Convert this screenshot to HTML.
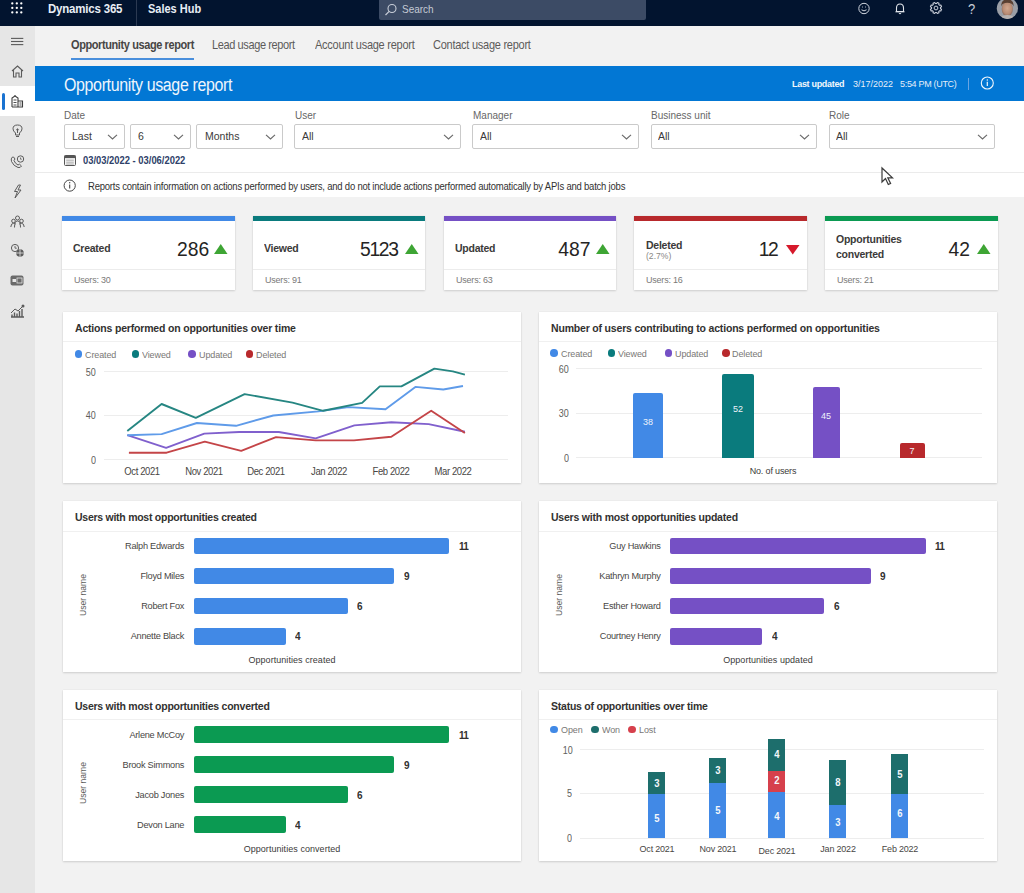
<!DOCTYPE html>
<html><head><meta charset="utf-8"><title>Opportunity usage report</title>
<style>
*{margin:0;padding:0;box-sizing:border-box}
html,body{width:1024px;height:893px;overflow:hidden}
body{background:#f2f2f2;font-family:"Liberation Sans",sans-serif;position:relative;color:#323130}
.a{position:absolute}
.t{position:absolute;white-space:nowrap;line-height:1}
.card{position:absolute;background:#fff;box-shadow:0 1px 2px rgba(0,0,0,.14),0 0 1px rgba(0,0,0,.10)}
svg{position:absolute;overflow:visible}
</style></head><body>
<div class="a" style="left:0;top:0;width:1024px;height:26px;background:#02142f"></div>
<div class="a" style="left:0;top:26px;width:35px;height:867px;background:#e6e6e6"></div>
<div class="a" style="left:0;top:86px;width:35px;height:30px;background:#fff"></div>
<div class="a" style="left:2px;top:92.5px;width:3px;height:17.5px;background:#1a73d1;border-radius:2px"></div>
<div class="a" style="left:35px;top:26px;width:989px;height:40px;background:#f2f2f2"></div>
<div class="a" style="left:35px;top:66px;width:989px;height:35px;background:#0277d4"></div>
<div class="a" style="left:35px;top:101px;width:989px;height:96px;background:#fff"></div>
<div class="a" style="left:35px;top:171.5px;width:989px;height:1px;background:#ebebeb"></div>
<svg style="left:0;top:0" width="30" height="20"><circle cx="12.3" cy="3.4" r="1.15" fill="#fff"/><circle cx="12.3" cy="7.9" r="1.15" fill="#fff"/><circle cx="12.3" cy="12.4" r="1.15" fill="#fff"/><circle cx="16.8" cy="3.4" r="1.15" fill="#fff"/><circle cx="16.8" cy="7.9" r="1.15" fill="#fff"/><circle cx="16.8" cy="12.4" r="1.15" fill="#fff"/><circle cx="21.3" cy="3.4" r="1.15" fill="#fff"/><circle cx="21.3" cy="7.9" r="1.15" fill="#fff"/><circle cx="21.3" cy="12.4" r="1.15" fill="#fff"/></svg>
<div class="t" style="font-size:12.65px;font-weight:700;color:#e8edf5;top:2.89px;letter-spacing:-0.220px;left:47.60px;transform:scaleX(0.9091);transform-origin:0 0;">Dynamics 365</div>
<div class="a" style="left:136px;top:0;width:1px;height:26px;background:#2c3a52"></div>
<div class="t" style="font-size:12.10px;font-weight:700;color:#e8edf5;top:3.36px;left:148.00px;transform:scaleX(0.9091);transform-origin:0 0;">Sales Hub</div>
<div class="a" style="left:379px;top:0;width:267px;height:20px;background:#3c4b65;border-radius:0 0 2px 2px"></div>
<svg style="left:383px;top:2px" width="16" height="16"><circle cx="9" cy="6.5" r="4" fill="none" stroke="#c8ced8" stroke-width="1.1"/><line x1="6.2" y1="9.3" x2="2.5" y2="13" stroke="#c8ced8" stroke-width="1.2"/></svg>
<div class="t" style="font-size:11.00px;font-weight:400;color:#c4cad4;top:4.29px;left:402.00px;transform:scaleX(0.9091);transform-origin:0 0;">Search</div>
<svg style="left:856px;top:1px" width="16" height="16"><circle cx="8" cy="7.5" r="5.2" fill="none" stroke="#d0d5de" stroke-width="1"/><path d="M5.5 8.8 Q8 11 10.5 8.8" fill="none" stroke="#d0d5de" stroke-width="1"/><line x1="6" y1="6" x2="6.8" y2="6" stroke="#d0d5de" stroke-width="1"/><line x1="9.2" y1="6" x2="10" y2="6" stroke="#d0d5de" stroke-width="1"/></svg>
<svg style="left:892px;top:1px" width="16" height="16"><path d="M4.5 10.5 V7 Q4.5 3 8 3 Q11.5 3 11.5 7 V10.5 Z" fill="none" stroke="#e0e4ea" stroke-width="1.1"/><line x1="3.5" y1="10.8" x2="12.5" y2="10.8" stroke="#e0e4ea" stroke-width="1.1"/><path d="M6.8 12.2 Q8 13.6 9.2 12.2" fill="none" stroke="#e0e4ea" stroke-width="1"/></svg>
<svg style="left:928px;top:0px" width="16" height="16"><path d="M12.46 8.60 L13.55 9.31 L12.85 10.99 L11.58 10.73 L10.73 11.58 L10.99 12.85 L9.31 13.55 L8.60 12.46 L7.40 12.46 L6.69 13.55 L5.01 12.85 L5.27 11.58 L4.42 10.73 L3.15 10.99 L2.45 9.31 L3.54 8.60 L3.54 7.40 L2.45 6.69 L3.15 5.01 L4.42 5.27 L5.27 4.42 L5.01 3.15 L6.69 2.45 L7.40 3.54 L8.60 3.54 L9.31 2.45 L10.99 3.15 L10.73 4.42 L11.58 5.27 L12.85 5.01 L13.55 6.69 L12.46 7.40 Z" fill="none" stroke="#c9ced8" stroke-width="1.1" stroke-linejoin="round"/><circle cx="8" cy="8" r="1.9" fill="none" stroke="#c9ced8" stroke-width="1"/></svg>
<div class="t" style="font-size:14.95px;font-weight:400;color:#c8ced8;top:2.44px;left:967.80px;transform:scaleX(0.8696);transform-origin:0 0;">?</div>
<svg style="left:996px;top:-3px" width="23" height="23"><defs><clipPath id="av"><circle cx="11.4" cy="11.3" r="10.6"/></clipPath><radialGradient id="fg" cx="50%" cy="45%" r="55%"><stop offset="0" stop-color="#d2a78e"/><stop offset="0.7" stop-color="#b98c74"/><stop offset="1" stop-color="#8a6a5c"/></radialGradient></defs><g clip-path="url(#av)"><rect width="23" height="23" fill="#9a9ea6"/><ellipse cx="11.3" cy="12" rx="5.6" ry="7.6" fill="url(#fg)"/><path d="M5.2 9.5 Q5 2.2 11.4 2.4 Q17.8 2.2 17.6 9.5 Q16.5 5.8 11.3 5.8 Q6.2 5.8 5.2 9.5 Z" fill="#5a4032"/><ellipse cx="11.3" cy="21" rx="7" ry="3" fill="#b8b2b0"/></g></svg>
<svg style="left:11px;top:36px" width="13" height="10"><line x1="0" y1="2.4" x2="12.3" y2="2.4" stroke="#5b5b5b" stroke-width="1.1"/><line x1="0" y1="5.5" x2="12.3" y2="5.5" stroke="#5b5b5b" stroke-width="1.1"/><line x1="0" y1="8.6" x2="12.3" y2="8.6" stroke="#5b5b5b" stroke-width="1.1"/></svg>
<svg style="left:11px;top:65px" width="13" height="13"><path d="M1 6 L6.5 1 L12 6 M2.5 4.8 V12 H5 V8 H8 V12 H10.5 V4.8" fill="none" stroke="#5b5b5b" stroke-width="1.1"/></svg>
<svg style="left:11px;top:94px" width="13" height="14"><path d="M1 13 V4 L4 2 V1 M4 2 L7 4 V13 M7 7 H11.5 V13 M1 13 H12" fill="none" stroke="#3c3c3c" stroke-width="1.1"/><path d="M2.5 6 H5.5 M2.5 8.5 H5.5 M2.5 11 H5.5 M8.5 9 H10.5 M8.5 11 H10.5" stroke="#3c3c3c" stroke-width="0.9"/></svg>
<svg style="left:12px;top:124px" width="11" height="14"><path d="M3.5 9 Q1 7 1 4.8 Q1 1 5.5 1 Q10 1 10 4.8 Q10 7 7.5 9 V11 H3.5 Z" fill="none" stroke="#5b5b5b" stroke-width="1"/><path d="M4 12.5 H7 M4.2 6 L5.5 4.8 L6.8 6 M5.5 5 V9" fill="none" stroke="#5b5b5b" stroke-width="1"/></svg>
<svg style="left:10px;top:154px" width="15" height="15"><path d="M2.5 3 Q0.5 4.5 1.5 7.5 Q3.5 12 8 13.5 Q10.5 14 11.5 12 L9.5 10.2 L8 11 Q5 9.5 4 6.5 L5 5 L3.5 3 Z" fill="none" stroke="#5b5b5b" stroke-width="1"/><circle cx="10.5" cy="5" r="3.2" fill="none" stroke="#5b5b5b" stroke-width="1"/><path d="M10.5 3.5 V5.2 H11.8" fill="none" stroke="#5b5b5b" stroke-width="0.8"/></svg>
<svg style="left:12px;top:184px" width="11" height="15"><path d="M6.5 1 L2.5 7.5 H5.5 L3 14 L9 6 H6 L8.5 1 Z" fill="none" stroke="#5b5b5b" stroke-width="1"/></svg>
<svg style="left:10px;top:215px" width="15" height="14"><circle cx="7.5" cy="3" r="2" fill="none" stroke="#5b5b5b" stroke-width="1"/><circle cx="3.5" cy="6" r="1.8" fill="none" stroke="#5b5b5b" stroke-width="1"/><circle cx="11.5" cy="6" r="1.8" fill="none" stroke="#5b5b5b" stroke-width="1"/><path d="M0.8 12 Q1 8.3 3.5 8.3 Q5 8.3 5.6 9.2 M14.2 12 Q14 8.3 11.5 8.3 Q10 8.3 9.4 9.2 M4.5 12.5 Q4.5 6 7.5 6 Q10.5 6 10.5 12.5" fill="none" stroke="#5b5b5b" stroke-width="1"/></svg>
<svg style="left:10px;top:243px" width="15" height="15"><circle cx="5" cy="5" r="3.6" fill="none" stroke="#5b5b5b" stroke-width="1"/><path d="M5 3 V5.2 H6.8" fill="none" stroke="#5b5b5b" stroke-width="0.9"/><circle cx="10" cy="10" r="3.8" fill="#5b5b5b"/><path d="M6.2 10 H13.8 M10 6.2 V13.8" stroke="#e6e6e6" stroke-width="0.8"/></svg>
<svg style="left:10px;top:275px" width="15" height="12"><rect x="0.5" y="0.5" width="13" height="10" rx="2" fill="#6a6a6a"/><rect x="2.5" y="4" width="3.5" height="3" fill="#e6e6e6"/><rect x="7" y="3" width="5" height="5" fill="none" stroke="#e6e6e6" stroke-width="0.8"/></svg>
<svg style="left:10px;top:304px" width="15" height="14"><path d="M1 13 H14 M2 13 V10.5 M4.5 13 V8.5 M7 13 V9.5 M9.5 13 V7 M12 13 V5" stroke="#5b5b5b" stroke-width="1.4"/><path d="M1 9 L5 5 L8 7 L12.5 2.5" fill="none" stroke="#5b5b5b" stroke-width="1"/><circle cx="13" cy="2" r="1.5" fill="#5b5b5b"/></svg>
<div class="t" style="font-size:12.10px;font-weight:700;color:#474645;top:38.66px;letter-spacing:-0.440px;left:71.20px;transform:scaleX(0.9091);transform-origin:0 0;">Opportunity usage report</div>
<div class="a" style="left:71px;top:58px;width:123px;height:2px;background:#4a8fdc"></div>
<div class="t" style="font-size:12.10px;font-weight:400;color:#5c5b5a;top:38.66px;letter-spacing:-0.418px;left:211.80px;transform:scaleX(0.9091);transform-origin:0 0;">Lead usage report</div>
<div class="t" style="font-size:12.10px;font-weight:400;color:#5c5b5a;top:38.66px;letter-spacing:-0.275px;left:314.50px;transform:scaleX(0.9091);transform-origin:0 0;">Account usage report</div>
<div class="t" style="font-size:12.10px;font-weight:400;color:#5c5b5a;top:38.66px;letter-spacing:-0.275px;left:433.00px;transform:scaleX(0.9091);transform-origin:0 0;">Contact usage report</div>
<div class="t" style="font-size:17.60px;font-weight:400;color:#eef5fc;top:76.90px;letter-spacing:-0.407px;left:64.30px;transform:scaleX(0.9091);transform-origin:0 0;">Opportunity usage report</div>
<div class="t" style="font-size:9.90px;font-weight:700;color:#f2f7fc;top:79.12px;letter-spacing:-0.330px;left:791.90px;transform:scaleX(0.9091);transform-origin:0 0;">Last updated</div>
<div class="t" style="font-size:9.90px;font-weight:400;color:#e6eef8;top:79.12px;left:852.70px;transform:scaleX(0.9091);transform-origin:0 0;">3/17/2022</div>
<div class="t" style="font-size:9.90px;font-weight:400;color:#e6eef8;top:79.12px;letter-spacing:-0.330px;left:899.80px;transform:scaleX(0.9091);transform-origin:0 0;">5:54 PM (UTC)</div>
<div class="a" style="left:968px;top:77.5px;width:1px;height:12.5px;background:#6aa5e3"></div>
<svg style="left:980px;top:75.5px" width="15" height="15"><circle cx="7.3" cy="7" r="6" fill="none" stroke="#f0f6fc" stroke-width="1.1"/><line x1="7.3" y1="5.8" x2="7.3" y2="10" stroke="#f0f6fc" stroke-width="1.2"/><circle cx="7.3" cy="3.9" r="0.75" fill="#f0f6fc"/></svg>
<div class="t" style="font-size:11.00px;font-weight:400;color:#676767;top:110.29px;left:64.40px;transform:scaleX(0.9091);transform-origin:0 0;">Date</div>
<div class="a" style="left:64px;top:124px;width:61px;height:24.5px;border:1px solid #cacaca;border-radius:2px;background:#fff"></div>
<div class="t" style="font-size:11.55px;font-weight:400;color:#3b3a39;top:131.42px;left:71.90px;transform:scaleX(0.9091);transform-origin:0 0;">Last</div>
<svg style="left:107.0px;top:133px" width="11" height="8"><path d="M1 1.8 L5.5 6 L10 1.8" fill="none" stroke="#6a6a6a" stroke-width="1.15"/></svg>
<div class="a" style="left:130px;top:124px;width:61px;height:24.5px;border:1px solid #cacaca;border-radius:2px;background:#fff"></div>
<div class="t" style="font-size:11.55px;font-weight:400;color:#3b3a39;top:131.42px;left:138.20px;transform:scaleX(0.9091);transform-origin:0 0;">6</div>
<svg style="left:173.0px;top:133px" width="11" height="8"><path d="M1 1.8 L5.5 6 L10 1.8" fill="none" stroke="#6a6a6a" stroke-width="1.15"/></svg>
<div class="a" style="left:196px;top:124px;width:87px;height:24.5px;border:1px solid #cacaca;border-radius:2px;background:#fff"></div>
<div class="t" style="font-size:11.55px;font-weight:400;color:#3b3a39;top:131.42px;left:204.50px;transform:scaleX(0.9091);transform-origin:0 0;">Months</div>
<svg style="left:265.0px;top:133px" width="11" height="8"><path d="M1 1.8 L5.5 6 L10 1.8" fill="none" stroke="#6a6a6a" stroke-width="1.15"/></svg>
<div class="t" style="font-size:11.00px;font-weight:400;color:#676767;top:110.29px;left:294.80px;transform:scaleX(0.9091);transform-origin:0 0;">User</div>
<div class="a" style="left:294px;top:124px;width:167px;height:24.5px;border:1px solid #cacaca;border-radius:2px;background:#fff"></div>
<div class="t" style="font-size:11.55px;font-weight:400;color:#3b3a39;top:131.42px;left:301.80px;transform:scaleX(0.9091);transform-origin:0 0;">All</div>
<svg style="left:443.0px;top:133px" width="11" height="8"><path d="M1 1.8 L5.5 6 L10 1.8" fill="none" stroke="#6a6a6a" stroke-width="1.15"/></svg>
<div class="t" style="font-size:11.00px;font-weight:400;color:#676767;top:110.29px;left:473.10px;transform:scaleX(0.9091);transform-origin:0 0;">Manager</div>
<div class="a" style="left:472px;top:124px;width:166.5px;height:24.5px;border:1px solid #cacaca;border-radius:2px;background:#fff"></div>
<div class="t" style="font-size:11.55px;font-weight:400;color:#3b3a39;top:131.42px;left:479.80px;transform:scaleX(0.9091);transform-origin:0 0;">All</div>
<svg style="left:620.5px;top:133px" width="11" height="8"><path d="M1 1.8 L5.5 6 L10 1.8" fill="none" stroke="#6a6a6a" stroke-width="1.15"/></svg>
<div class="t" style="font-size:11.00px;font-weight:400;color:#676767;top:110.29px;left:651.20px;transform:scaleX(0.9091);transform-origin:0 0;">Business unit</div>
<div class="a" style="left:650.5px;top:124px;width:166.5px;height:24.5px;border:1px solid #cacaca;border-radius:2px;background:#fff"></div>
<div class="t" style="font-size:11.55px;font-weight:400;color:#3b3a39;top:131.42px;left:658.30px;transform:scaleX(0.9091);transform-origin:0 0;">All</div>
<svg style="left:799.0px;top:133px" width="11" height="8"><path d="M1 1.8 L5.5 6 L10 1.8" fill="none" stroke="#6a6a6a" stroke-width="1.15"/></svg>
<div class="t" style="font-size:11.00px;font-weight:400;color:#676767;top:110.29px;left:829.40px;transform:scaleX(0.9091);transform-origin:0 0;">Role</div>
<div class="a" style="left:828.5px;top:124px;width:166.5px;height:24.5px;border:1px solid #cacaca;border-radius:2px;background:#fff"></div>
<div class="t" style="font-size:11.55px;font-weight:400;color:#3b3a39;top:131.42px;left:836.30px;transform:scaleX(0.9091);transform-origin:0 0;">All</div>
<svg style="left:977.0px;top:133px" width="11" height="8"><path d="M1 1.8 L5.5 6 L10 1.8" fill="none" stroke="#6a6a6a" stroke-width="1.15"/></svg>
<svg style="left:64px;top:155px" width="12" height="11"><rect x="0.5" y="0.5" width="11" height="10" rx="1" fill="#f4f4f4" stroke="#555" stroke-width="1"/><rect x="0.5" y="0.5" width="11" height="2.6" fill="#555"/><path d="M2.2 5.2 H9.8 M2.2 7.2 H9.8 M2.2 9 H9.8" stroke="#9a9a9a" stroke-width="0.8"/></svg>
<div class="t" style="font-size:10.34px;font-weight:700;color:#2e4168;top:156.35px;left:82.70px;transform:scaleX(0.9091);transform-origin:0 0;">03/03/2022 - 03/06/2022</div>
<svg style="left:63px;top:179px" width="14" height="14"><circle cx="6.7" cy="6.6" r="5.6" fill="none" stroke="#444" stroke-width="1"/><line x1="6.7" y1="5.5" x2="6.7" y2="9.6" stroke="#444" stroke-width="1.1"/><circle cx="6.7" cy="3.8" r="0.7" fill="#444"/></svg>
<div class="t" style="font-size:10.45px;font-weight:400;color:#323130;top:181.55px;letter-spacing:-0.231px;left:88.00px;transform:scaleX(0.9091);transform-origin:0 0;">Reports contain information on actions performed by users, and do not include actions performed automatically by APIs and batch jobs</div>
<svg style="left:881px;top:167px" width="14" height="20"><path d="M1 1 L1 15 L4.5 11.5 L7.3 17.5 L9.6 16.5 L6.8 10.8 L11.5 10.8 Z" fill="#fff" stroke="#3a3a3a" stroke-width="1.2"/></svg>
<div class="card" style="left:62px;top:216px;width:172.5px;height:73.5px"></div>
<div class="a" style="left:62px;top:216px;width:172.5px;height:5px;background:#4189e6"></div>
<div class="a" style="left:62px;top:269px;width:172.5px;height:1px;background:#ececec"></div>
<div class="t" style="font-size:11.55px;font-weight:700;color:#3b3a39;top:243.42px;letter-spacing:-0.275px;left:73.40px;transform:scaleX(0.9091);transform-origin:0 0;">Created</div>
<div class="t" style="font-size:9.90px;font-weight:400;color:#7a7978;top:274.82px;letter-spacing:-0.220px;left:74.40px;transform:scaleX(0.9091);transform-origin:0 0;">Users: 30</div>
<svg style="left:214.0px;top:244.3px" width="14" height="11"><path d="M0 10 L6.75 0 L13.5 10 Z" fill="#3ea534"/></svg>
<div class="t" style="font-size:19.30px;font-weight:400;color:#252423;top:239.86px;left:177.00px;">286</div>
<div class="card" style="left:252.5px;top:216px;width:172.5px;height:73.5px"></div>
<div class="a" style="left:252.5px;top:216px;width:172.5px;height:5px;background:#0a7b7d"></div>
<div class="a" style="left:252.5px;top:269px;width:172.5px;height:1px;background:#ececec"></div>
<div class="t" style="font-size:11.55px;font-weight:700;color:#3b3a39;top:243.42px;letter-spacing:-0.275px;left:263.90px;transform:scaleX(0.9091);transform-origin:0 0;">Viewed</div>
<div class="t" style="font-size:9.90px;font-weight:400;color:#7a7978;top:274.82px;letter-spacing:-0.220px;left:264.90px;transform:scaleX(0.9091);transform-origin:0 0;">Users: 91</div>
<svg style="left:404.5px;top:244.3px" width="14" height="11"><path d="M0 10 L6.75 0 L13.5 10 Z" fill="#3ea534"/></svg>
<div class="t" style="font-size:19.30px;font-weight:400;color:#252423;top:239.86px;letter-spacing:-1.300px;left:360.00px;">5123</div>
<div class="card" style="left:443.5px;top:216px;width:172.5px;height:73.5px"></div>
<div class="a" style="left:443.5px;top:216px;width:172.5px;height:5px;background:#7550c5"></div>
<div class="a" style="left:443.5px;top:269px;width:172.5px;height:1px;background:#ececec"></div>
<div class="t" style="font-size:11.55px;font-weight:700;color:#3b3a39;top:243.42px;letter-spacing:-0.275px;left:454.90px;transform:scaleX(0.9091);transform-origin:0 0;">Updated</div>
<div class="t" style="font-size:9.90px;font-weight:400;color:#7a7978;top:274.82px;letter-spacing:-0.220px;left:455.90px;transform:scaleX(0.9091);transform-origin:0 0;">Users: 63</div>
<svg style="left:595.5px;top:244.3px" width="14" height="11"><path d="M0 10 L6.75 0 L13.5 10 Z" fill="#3ea534"/></svg>
<div class="t" style="font-size:19.30px;font-weight:400;color:#252423;top:239.86px;left:558.20px;">487</div>
<div class="card" style="left:634px;top:216px;width:172.5px;height:73.5px"></div>
<div class="a" style="left:634px;top:216px;width:172.5px;height:5px;background:#b8292c"></div>
<div class="a" style="left:634px;top:269px;width:172.5px;height:1px;background:#ececec"></div>
<div class="t" style="font-size:11.55px;font-weight:700;color:#3b3a39;top:239.52px;letter-spacing:-0.275px;left:645.80px;transform:scaleX(0.9091);transform-origin:0 0;">Deleted</div>
<div class="t" style="font-size:9.46px;font-weight:400;color:#8a8886;top:251.19px;left:645.80px;transform:scaleX(0.9091);transform-origin:0 0;">(2.7%)</div>
<div class="t" style="font-size:9.90px;font-weight:400;color:#7a7978;top:274.82px;letter-spacing:-0.220px;left:646.40px;transform:scaleX(0.9091);transform-origin:0 0;">Users: 16</div>
<svg style="left:786.0px;top:244.5px" width="14" height="11"><path d="M0 0 L13.5 0 L6.75 9.5 Z" fill="#d6192b"/></svg>
<div class="t" style="font-size:19.30px;font-weight:400;color:#252423;top:239.86px;letter-spacing:-1.300px;left:758.70px;">12</div>
<div class="card" style="left:825px;top:216px;width:172.5px;height:73.5px"></div>
<div class="a" style="left:825px;top:216px;width:172.5px;height:5px;background:#0b9a52"></div>
<div class="a" style="left:825px;top:269px;width:172.5px;height:1px;background:#ececec"></div>
<div class="t" style="font-size:11.55px;font-weight:700;color:#3b3a39;top:234.42px;letter-spacing:-0.275px;left:836.40px;transform:scaleX(0.9091);transform-origin:0 0;">Opportunities</div>
<div class="t" style="font-size:11.55px;font-weight:700;color:#3b3a39;top:248.72px;letter-spacing:-0.275px;left:836.40px;transform:scaleX(0.9091);transform-origin:0 0;">converted</div>
<div class="t" style="font-size:9.90px;font-weight:400;color:#7a7978;top:274.82px;letter-spacing:-0.220px;left:837.40px;transform:scaleX(0.9091);transform-origin:0 0;">Users: 21</div>
<svg style="left:977.0px;top:244.3px" width="14" height="11"><path d="M0 10 L6.75 0 L13.5 10 Z" fill="#3ea534"/></svg>
<div class="t" style="font-size:19.30px;font-weight:400;color:#252423;top:239.86px;left:948.50px;">42</div>
<div class="card" style="left:62.5px;top:312px;width:458px;height:171px"></div>
<div class="t" style="font-size:11.55px;font-weight:700;color:#323130;top:322.82px;letter-spacing:-0.198px;left:74.90px;transform:scaleX(0.9091);transform-origin:0 0;">Actions performed on opportunities over time</div>
<div class="a" style="left:62.5px;top:341.3px;width:458px;height:1px;background:#f0f0f0"></div>
<div class="a" style="left:74.60000000000001px;top:350.2px;width:7.6px;height:7.6px;border-radius:50%;background:#4189e6"></div>
<div class="t" style="font-size:9.90px;font-weight:400;color:#797775;top:349.52px;letter-spacing:-0.110px;left:85.00px;transform:scaleX(0.9091);transform-origin:0 0;">Created</div>
<div class="a" style="left:131.6px;top:350.2px;width:7.6px;height:7.6px;border-radius:50%;background:#0a7b7d"></div>
<div class="t" style="font-size:9.90px;font-weight:400;color:#797775;top:349.52px;letter-spacing:-0.110px;left:142.00px;transform:scaleX(0.9091);transform-origin:0 0;">Viewed</div>
<div class="a" style="left:188.2px;top:350.2px;width:7.6px;height:7.6px;border-radius:50%;background:#7550c5"></div>
<div class="t" style="font-size:9.90px;font-weight:400;color:#797775;top:349.52px;letter-spacing:-0.110px;left:198.60px;transform:scaleX(0.9091);transform-origin:0 0;">Updated</div>
<div class="a" style="left:245.7px;top:350.2px;width:7.6px;height:7.6px;border-radius:50%;background:#b8292c"></div>
<div class="t" style="font-size:9.90px;font-weight:400;color:#797775;top:349.52px;letter-spacing:-0.110px;left:256.10px;transform:scaleX(0.9091);transform-origin:0 0;">Deleted</div>
<div class="a" style="left:104px;top:370.8px;width:404px;height:1px;background:#ededed"></div>
<div class="t" style="font-size:10.62px;font-weight:400;color:#605e5c;top:366.51px;right:928.10px;transform:scaleX(0.8475);transform-origin:100% 0;">50</div>
<div class="a" style="left:104px;top:414.7px;width:404px;height:1px;background:#ededed"></div>
<div class="t" style="font-size:10.62px;font-weight:400;color:#605e5c;top:410.41px;right:928.10px;transform:scaleX(0.8475);transform-origin:100% 0;">40</div>
<div class="a" style="left:104px;top:459.2px;width:404px;height:1px;background:#ededed"></div>
<div class="t" style="font-size:10.62px;font-weight:400;color:#605e5c;top:454.91px;right:928.10px;transform:scaleX(0.8475);transform-origin:100% 0;">0</div>
<div class="t" style="font-size:10.45px;font-weight:400;color:#484644;top:466.55px;letter-spacing:-0.440px;left:141.50px;transform:translateX(-50%) scaleX(0.9091);transform-origin:50% 0;">Oct 2021</div>
<div class="t" style="font-size:10.45px;font-weight:400;color:#484644;top:466.55px;letter-spacing:-0.440px;left:203.70px;transform:translateX(-50%) scaleX(0.9091);transform-origin:50% 0;">Nov 2021</div>
<div class="t" style="font-size:10.45px;font-weight:400;color:#484644;top:466.55px;letter-spacing:-0.440px;left:266.00px;transform:translateX(-50%) scaleX(0.9091);transform-origin:50% 0;">Dec 2021</div>
<div class="t" style="font-size:10.45px;font-weight:400;color:#484644;top:466.55px;letter-spacing:-0.440px;left:328.50px;transform:translateX(-50%) scaleX(0.9091);transform-origin:50% 0;">Jan 2022</div>
<div class="t" style="font-size:10.45px;font-weight:400;color:#484644;top:466.55px;letter-spacing:-0.440px;left:390.80px;transform:translateX(-50%) scaleX(0.9091);transform-origin:50% 0;">Feb 2022</div>
<div class="t" style="font-size:10.45px;font-weight:400;color:#484644;top:466.55px;letter-spacing:-0.440px;left:452.80px;transform:translateX(-50%) scaleX(0.9091);transform-origin:50% 0;">Mar 2022</div>
<svg style="left:0;top:0" width="1024" height="893"><polyline points="127.3,435.2 166.1,447.8 204.3,433.6 239.1,432.0 278.8,432.0 315.7,438.4 354.4,425.4 391.3,422.2 428.7,424.1 464.9,431.7" fill="none" stroke="#8060cd" stroke-width="1.9" stroke-linejoin="round" stroke-linecap="butt"/><polyline points="128.9,452.7 166.6,452.7 204.8,441.7 241.2,450.8 276.0,437.1 315.7,440.4 354.0,440.4 391.3,436.8 431.2,410.8 464.9,433.0" fill="none" stroke="#c44548" stroke-width="1.9" stroke-linejoin="round" stroke-linecap="butt"/><polyline points="127.3,435.2 161.6,434.1 196.9,423.0 236.0,425.8 273.3,415.5 318.4,411.4 348.5,407.1 385.5,409.3 415.4,386.9 443.3,389.5 463.0,386.0" fill="none" stroke="#5f9be9" stroke-width="1.9" stroke-linejoin="round" stroke-linecap="butt"/><polyline points="127.3,430.9 161.6,404.0 195.8,417.9 244.6,394.1 292.5,402.6 323.2,410.8 362.1,402.9 379.8,386.4 401.4,386.4 434.4,368.6 452.8,371.4 464.9,374.6" fill="none" stroke="#268682" stroke-width="1.9" stroke-linejoin="round" stroke-linecap="butt"/></svg>
<div class="card" style="left:539px;top:312px;width:458px;height:171px"></div>
<div class="t" style="font-size:11.55px;font-weight:700;color:#323130;top:322.82px;letter-spacing:-0.198px;left:551.40px;transform:scaleX(0.9091);transform-origin:0 0;">Number of users contributing to actions performed on opportunities</div>
<div class="a" style="left:539px;top:341.3px;width:458px;height:1px;background:#f0f0f0"></div>
<div class="a" style="left:550.4000000000001px;top:349.2px;width:7.6px;height:7.6px;border-radius:50%;background:#4189e6"></div>
<div class="t" style="font-size:9.90px;font-weight:400;color:#797775;top:348.52px;letter-spacing:-0.110px;left:560.80px;transform:scaleX(0.9091);transform-origin:0 0;">Created</div>
<div class="a" style="left:607.8000000000001px;top:349.2px;width:7.6px;height:7.6px;border-radius:50%;background:#0a7b7d"></div>
<div class="t" style="font-size:9.90px;font-weight:400;color:#797775;top:348.52px;letter-spacing:-0.110px;left:618.20px;transform:scaleX(0.9091);transform-origin:0 0;">Viewed</div>
<div class="a" style="left:664.8000000000001px;top:349.2px;width:7.6px;height:7.6px;border-radius:50%;background:#7550c5"></div>
<div class="t" style="font-size:9.90px;font-weight:400;color:#797775;top:348.52px;letter-spacing:-0.110px;left:675.20px;transform:scaleX(0.9091);transform-origin:0 0;">Updated</div>
<div class="a" style="left:722.0px;top:349.2px;width:7.6px;height:7.6px;border-radius:50%;background:#b8292c"></div>
<div class="t" style="font-size:9.90px;font-weight:400;color:#797775;top:348.52px;letter-spacing:-0.110px;left:732.40px;transform:scaleX(0.9091);transform-origin:0 0;">Deleted</div>
<div class="a" style="left:576px;top:368.4px;width:405.5px;height:1px;background:#ededed"></div>
<div class="t" style="font-size:10.62px;font-weight:400;color:#605e5c;top:364.11px;right:455.10px;transform:scaleX(0.8475);transform-origin:100% 0;">60</div>
<div class="a" style="left:576px;top:412.5px;width:405.5px;height:1px;background:#ededed"></div>
<div class="t" style="font-size:10.62px;font-weight:400;color:#605e5c;top:408.21px;right:455.10px;transform:scaleX(0.8475);transform-origin:100% 0;">30</div>
<div class="a" style="left:576px;top:457.4px;width:405.5px;height:1px;background:#ededed"></div>
<div class="t" style="font-size:10.62px;font-weight:400;color:#605e5c;top:453.11px;right:455.10px;transform:scaleX(0.8475);transform-origin:100% 0;">0</div>
<div class="a" style="left:633.3px;top:393px;width:29.700000000000045px;height:64.89999999999998px;background:#4189e6;border-radius:2px 2px 0 0"></div>
<div class="t" style="font-size:9.90px;font-weight:400;color:#eef3fb;top:416.72px;left:648.15px;transform:translateX(-50%) scaleX(0.9091);transform-origin:50% 0;">38</div>
<div class="a" style="left:722px;top:374.1px;width:31.5px;height:83.79999999999995px;background:#0a7b7d;border-radius:2px 2px 0 0"></div>
<div class="t" style="font-size:9.90px;font-weight:400;color:#eef3fb;top:403.72px;left:737.75px;transform:translateX(-50%) scaleX(0.9091);transform-origin:50% 0;">52</div>
<div class="a" style="left:812.7px;top:387.3px;width:27.5px;height:70.59999999999997px;background:#7550c5;border-radius:2px 2px 0 0"></div>
<div class="t" style="font-size:9.90px;font-weight:400;color:#eef3fb;top:410.92px;left:826.45px;transform:translateX(-50%) scaleX(0.9091);transform-origin:50% 0;">45</div>
<div class="a" style="left:899.6px;top:442.8px;width:25.199999999999932px;height:15.099999999999966px;background:#b8292c;border-radius:2px 2px 0 0"></div>
<div class="t" style="font-size:9.90px;font-weight:400;color:#eef3fb;top:445.82px;left:912.20px;transform:translateX(-50%) scaleX(0.9091);transform-origin:50% 0;">7</div>
<div class="t" style="font-size:9.90px;font-weight:400;color:#3b3a39;top:466.22px;letter-spacing:-0.165px;left:772.80px;transform:translateX(-50%) scaleX(0.9091);transform-origin:50% 0;">No. of users</div>
<div class="card" style="left:62.5px;top:501.3px;width:458px;height:171px"></div>
<div class="t" style="font-size:11.55px;font-weight:700;color:#323130;top:512.12px;letter-spacing:-0.286px;left:74.90px;transform:scaleX(0.9091);transform-origin:0 0;">Users with most opportunities created</div>
<div class="a" style="left:62.5px;top:530.6px;width:458px;height:1px;background:#f0f0f0"></div>
<div class="a" style="left:193.7px;top:537.6px;width:255.5px;height:16.8px;background:#4189e6;border-radius:2px"></div>
<div class="t" style="font-size:9.20px;font-weight:400;color:#484644;top:542.21px;letter-spacing:-0.250px;right:839.90px;">Ralph Edwards</div>
<div class="t" style="font-size:11.00px;font-weight:700;color:#323130;top:541.29px;letter-spacing:-0.880px;left:458.60px;transform:scaleX(0.9091);transform-origin:0 0;">11</div>
<div class="a" style="left:193.7px;top:567.65px;width:200.7px;height:16.8px;background:#4189e6;border-radius:2px"></div>
<div class="t" style="font-size:9.20px;font-weight:400;color:#484644;top:572.26px;letter-spacing:-0.250px;right:839.90px;">Floyd Miles</div>
<div class="t" style="font-size:11.00px;font-weight:700;color:#323130;top:571.34px;left:403.80px;transform:scaleX(0.9091);transform-origin:0 0;">9</div>
<div class="a" style="left:193.7px;top:597.7px;width:154.3px;height:16.8px;background:#4189e6;border-radius:2px"></div>
<div class="t" style="font-size:9.20px;font-weight:400;color:#484644;top:602.31px;letter-spacing:-0.250px;right:839.90px;">Robert Fox</div>
<div class="t" style="font-size:11.00px;font-weight:700;color:#323130;top:601.39px;left:357.40px;transform:scaleX(0.9091);transform-origin:0 0;">6</div>
<div class="a" style="left:193.7px;top:627.75px;width:92.2px;height:16.8px;background:#4189e6;border-radius:2px"></div>
<div class="t" style="font-size:9.20px;font-weight:400;color:#484644;top:632.36px;letter-spacing:-0.250px;right:839.90px;">Annette Black</div>
<div class="t" style="font-size:11.00px;font-weight:700;color:#323130;top:631.44px;left:295.30px;transform:scaleX(0.9091);transform-origin:0 0;">4</div>
<div class="t" style="font-size:9.90px;font-weight:400;color:#3b3a39;top:655.02px;letter-spacing:0.066px;left:291.50px;transform:translateX(-50%) scaleX(0.9091);transform-origin:50% 0;">Opportunities created</div>
<div class="t" style="left:61.8px;top:589.8px;width:42px;font-size:8.6px;color:#605e5c;transform:rotate(-90deg);text-align:center;line-height:10px">User name</div>
<div class="card" style="left:539px;top:501.3px;width:458px;height:171px"></div>
<div class="t" style="font-size:11.55px;font-weight:700;color:#323130;top:512.12px;letter-spacing:-0.237px;left:551.40px;transform:scaleX(0.9091);transform-origin:0 0;">Users with most opportunities updated</div>
<div class="a" style="left:539px;top:530.6px;width:458px;height:1px;background:#f0f0f0"></div>
<div class="a" style="left:670.2px;top:537.6px;width:255.5px;height:16.8px;background:#7550c5;border-radius:2px"></div>
<div class="t" style="font-size:9.20px;font-weight:400;color:#484644;top:542.21px;letter-spacing:-0.250px;right:363.40px;">Guy Hawkins</div>
<div class="t" style="font-size:11.00px;font-weight:700;color:#323130;top:541.29px;letter-spacing:-0.880px;left:935.10px;transform:scaleX(0.9091);transform-origin:0 0;">11</div>
<div class="a" style="left:670.2px;top:567.65px;width:200.7px;height:16.8px;background:#7550c5;border-radius:2px"></div>
<div class="t" style="font-size:9.20px;font-weight:400;color:#484644;top:572.26px;letter-spacing:-0.250px;right:363.40px;">Kathryn Murphy</div>
<div class="t" style="font-size:11.00px;font-weight:700;color:#323130;top:571.34px;left:880.30px;transform:scaleX(0.9091);transform-origin:0 0;">9</div>
<div class="a" style="left:670.2px;top:597.7px;width:154.3px;height:16.8px;background:#7550c5;border-radius:2px"></div>
<div class="t" style="font-size:9.20px;font-weight:400;color:#484644;top:602.31px;letter-spacing:-0.250px;right:363.40px;">Esther Howard</div>
<div class="t" style="font-size:11.00px;font-weight:700;color:#323130;top:601.39px;left:833.90px;transform:scaleX(0.9091);transform-origin:0 0;">6</div>
<div class="a" style="left:670.2px;top:627.75px;width:92.2px;height:16.8px;background:#7550c5;border-radius:2px"></div>
<div class="t" style="font-size:9.20px;font-weight:400;color:#484644;top:632.36px;letter-spacing:-0.250px;right:363.40px;">Courtney Henry</div>
<div class="t" style="font-size:11.00px;font-weight:700;color:#323130;top:631.44px;left:771.80px;transform:scaleX(0.9091);transform-origin:0 0;">4</div>
<div class="t" style="font-size:9.90px;font-weight:400;color:#3b3a39;top:655.02px;letter-spacing:0.066px;left:768.00px;transform:translateX(-50%) scaleX(0.9091);transform-origin:50% 0;">Opportunities updated</div>
<div class="t" style="left:538.3px;top:589.8px;width:42px;font-size:8.6px;color:#605e5c;transform:rotate(-90deg);text-align:center;line-height:10px">User name</div>
<div class="card" style="left:62.5px;top:689.8px;width:458px;height:171px"></div>
<div class="t" style="font-size:11.55px;font-weight:700;color:#323130;top:700.62px;letter-spacing:-0.270px;left:74.90px;transform:scaleX(0.9091);transform-origin:0 0;">Users with most opportunities converted</div>
<div class="a" style="left:62.5px;top:719.0999999999999px;width:458px;height:1px;background:#f0f0f0"></div>
<div class="a" style="left:193.7px;top:726.0999999999999px;width:255.5px;height:16.8px;background:#0b9a52;border-radius:2px"></div>
<div class="t" style="font-size:9.20px;font-weight:400;color:#484644;top:730.71px;letter-spacing:-0.250px;right:839.90px;">Arlene McCoy</div>
<div class="t" style="font-size:11.00px;font-weight:700;color:#323130;top:729.79px;letter-spacing:-0.880px;left:458.60px;transform:scaleX(0.9091);transform-origin:0 0;">11</div>
<div class="a" style="left:193.7px;top:756.1499999999999px;width:200.7px;height:16.8px;background:#0b9a52;border-radius:2px"></div>
<div class="t" style="font-size:9.20px;font-weight:400;color:#484644;top:760.76px;letter-spacing:-0.250px;right:839.90px;">Brook Simmons</div>
<div class="t" style="font-size:11.00px;font-weight:700;color:#323130;top:759.84px;left:403.80px;transform:scaleX(0.9091);transform-origin:0 0;">9</div>
<div class="a" style="left:193.7px;top:786.1999999999999px;width:154.3px;height:16.8px;background:#0b9a52;border-radius:2px"></div>
<div class="t" style="font-size:9.20px;font-weight:400;color:#484644;top:790.81px;letter-spacing:-0.250px;right:839.90px;">Jacob Jones</div>
<div class="t" style="font-size:11.00px;font-weight:700;color:#323130;top:789.89px;left:357.40px;transform:scaleX(0.9091);transform-origin:0 0;">6</div>
<div class="a" style="left:193.7px;top:816.2499999999999px;width:92.2px;height:16.8px;background:#0b9a52;border-radius:2px"></div>
<div class="t" style="font-size:9.20px;font-weight:400;color:#484644;top:820.86px;letter-spacing:-0.250px;right:839.90px;">Devon Lane</div>
<div class="t" style="font-size:11.00px;font-weight:700;color:#323130;top:819.94px;left:295.30px;transform:scaleX(0.9091);transform-origin:0 0;">4</div>
<div class="t" style="font-size:9.90px;font-weight:400;color:#3b3a39;top:843.52px;letter-spacing:0.066px;left:291.50px;transform:translateX(-50%) scaleX(0.9091);transform-origin:50% 0;">Opportunities converted</div>
<div class="t" style="left:61.8px;top:778.3px;width:42px;font-size:8.6px;color:#605e5c;transform:rotate(-90deg);text-align:center;line-height:10px">User name</div>
<div class="card" style="left:539px;top:689.8px;width:458px;height:171.5px"></div>
<div class="t" style="font-size:11.55px;font-weight:700;color:#323130;top:700.62px;letter-spacing:-0.259px;left:551.40px;transform:scaleX(0.9091);transform-origin:0 0;">Status of opportunities over time</div>
<div class="a" style="left:539px;top:719.0999999999999px;width:458px;height:1px;background:#f0f0f0"></div>
<div class="a" style="left:550.4000000000001px;top:725.6px;width:7.6px;height:7.6px;border-radius:50%;background:#4189e6"></div>
<div class="t" style="font-size:9.90px;font-weight:400;color:#797775;top:724.92px;letter-spacing:-0.110px;left:560.80px;transform:scaleX(0.9091);transform-origin:0 0;">Open</div>
<div class="a" style="left:591.4000000000001px;top:725.6px;width:7.6px;height:7.6px;border-radius:50%;background:#1d6e6c"></div>
<div class="t" style="font-size:9.90px;font-weight:400;color:#797775;top:724.92px;letter-spacing:-0.110px;left:601.80px;transform:scaleX(0.9091);transform-origin:0 0;">Won</div>
<div class="a" style="left:628.2px;top:725.6px;width:7.6px;height:7.6px;border-radius:50%;background:#d6404c"></div>
<div class="t" style="font-size:9.90px;font-weight:400;color:#797775;top:724.92px;letter-spacing:-0.110px;left:638.60px;transform:scaleX(0.9091);transform-origin:0 0;">Lost</div>
<div class="a" style="left:580px;top:748.8px;width:404px;height:1px;background:#ededed"></div>
<div class="t" style="font-size:10.62px;font-weight:400;color:#605e5c;top:744.51px;right:451.70px;transform:scaleX(0.8475);transform-origin:100% 0;">10</div>
<div class="a" style="left:580px;top:792.6px;width:404px;height:1px;background:#ededed"></div>
<div class="t" style="font-size:10.62px;font-weight:400;color:#605e5c;top:788.31px;right:451.70px;transform:scaleX(0.8475);transform-origin:100% 0;">5</div>
<div class="a" style="left:580px;top:837.6px;width:404px;height:1px;background:#ededed"></div>
<div class="t" style="font-size:10.62px;font-weight:400;color:#605e5c;top:833.31px;right:451.70px;transform:scaleX(0.8475);transform-origin:100% 0;">0</div>
<div class="a" style="left:648px;top:793.6px;width:17.1px;height:44.5px;background:#4189e6"></div>
<div class="t" style="font-size:10.45px;font-weight:700;color:#f4f7fb;top:813.65px;left:656.55px;transform:translateX(-50%) scaleX(0.9091);transform-origin:50% 0;">5</div>
<div class="a" style="left:648px;top:772px;width:17.1px;height:21.600000000000023px;background:#1d6e6c"></div>
<div class="t" style="font-size:10.45px;font-weight:700;color:#f4f7fb;top:778.95px;left:656.55px;transform:translateX(-50%) scaleX(0.9091);transform-origin:50% 0;">3</div>
<div class="t" style="font-size:9.90px;font-weight:400;color:#484644;top:843.92px;letter-spacing:-0.220px;left:656.55px;transform:translateX(-50%) scaleX(0.9091);transform-origin:50% 0;">Oct 2021</div>
<div class="a" style="left:709.4px;top:782.6px;width:17.1px;height:55.5px;background:#4189e6"></div>
<div class="t" style="font-size:10.45px;font-weight:700;color:#f4f7fb;top:805.95px;left:717.95px;transform:translateX(-50%) scaleX(0.9091);transform-origin:50% 0;">5</div>
<div class="a" style="left:709.4px;top:757.5px;width:17.1px;height:25.100000000000023px;background:#1d6e6c"></div>
<div class="t" style="font-size:10.45px;font-weight:700;color:#f4f7fb;top:766.15px;left:717.95px;transform:translateX(-50%) scaleX(0.9091);transform-origin:50% 0;">3</div>
<div class="t" style="font-size:9.90px;font-weight:400;color:#484644;top:843.92px;letter-spacing:-0.220px;left:717.95px;transform:translateX(-50%) scaleX(0.9091);transform-origin:50% 0;">Nov 2021</div>
<div class="a" style="left:768.2px;top:792.4px;width:17.1px;height:45.700000000000045px;background:#4189e6"></div>
<div class="t" style="font-size:10.45px;font-weight:700;color:#f4f7fb;top:811.85px;left:776.75px;transform:translateX(-50%) scaleX(0.9091);transform-origin:50% 0;">4</div>
<div class="a" style="left:768.2px;top:770.9px;width:17.1px;height:21.5px;background:#d6404c"></div>
<div class="t" style="font-size:10.45px;font-weight:700;color:#f4f7fb;top:776.15px;left:776.75px;transform:translateX(-50%) scaleX(0.9091);transform-origin:50% 0;">2</div>
<div class="a" style="left:768.2px;top:739.2px;width:17.1px;height:31.699999999999932px;background:#1d6e6c"></div>
<div class="t" style="font-size:10.45px;font-weight:700;color:#f4f7fb;top:749.65px;left:776.75px;transform:translateX(-50%) scaleX(0.9091);transform-origin:50% 0;">4</div>
<div class="t" style="font-size:9.90px;font-weight:400;color:#484644;top:846.22px;letter-spacing:-0.220px;left:776.75px;transform:translateX(-50%) scaleX(0.9091);transform-origin:50% 0;">Dec 2021</div>
<div class="a" style="left:829.1px;top:804.8px;width:17.1px;height:33.30000000000007px;background:#4189e6"></div>
<div class="t" style="font-size:10.45px;font-weight:700;color:#f4f7fb;top:817.65px;left:837.65px;transform:translateX(-50%) scaleX(0.9091);transform-origin:50% 0;">3</div>
<div class="a" style="left:829.1px;top:759.8px;width:17.1px;height:45.0px;background:#1d6e6c"></div>
<div class="t" style="font-size:10.45px;font-weight:700;color:#f4f7fb;top:777.85px;left:837.65px;transform:translateX(-50%) scaleX(0.9091);transform-origin:50% 0;">8</div>
<div class="t" style="font-size:9.90px;font-weight:400;color:#484644;top:843.92px;letter-spacing:-0.220px;left:837.65px;transform:translateX(-50%) scaleX(0.9091);transform-origin:50% 0;">Jan 2022</div>
<div class="a" style="left:891.2px;top:793.8px;width:17.1px;height:44.30000000000007px;background:#4189e6"></div>
<div class="t" style="font-size:10.45px;font-weight:700;color:#f4f7fb;top:809.45px;left:899.75px;transform:translateX(-50%) scaleX(0.9091);transform-origin:50% 0;">6</div>
<div class="a" style="left:891.2px;top:754.4px;width:17.1px;height:39.39999999999998px;background:#1d6e6c"></div>
<div class="t" style="font-size:10.45px;font-weight:700;color:#f4f7fb;top:770.05px;left:899.75px;transform:translateX(-50%) scaleX(0.9091);transform-origin:50% 0;">5</div>
<div class="t" style="font-size:9.90px;font-weight:400;color:#484644;top:843.92px;letter-spacing:-0.220px;left:899.75px;transform:translateX(-50%) scaleX(0.9091);transform-origin:50% 0;">Feb 2022</div>
</body></html>
